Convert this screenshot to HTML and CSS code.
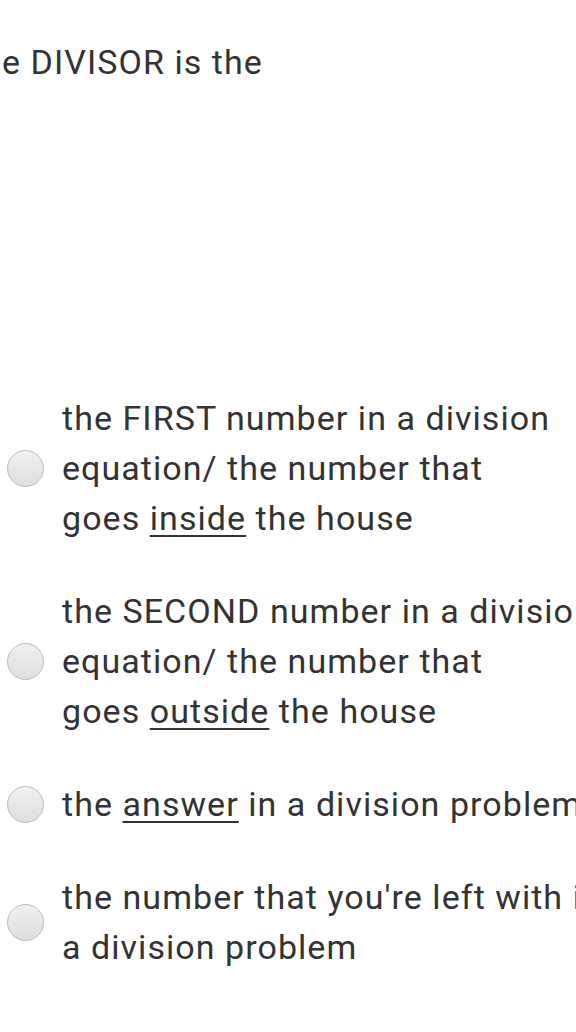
FILE: index.html
```html
<!DOCTYPE html>
<html>
<head>
<meta charset="utf-8">
<link rel="stylesheet" href="styles.css">
</head>
<body>
<div class="page">
  <div class="question">e DIVISOR is the</div>
  <div class="options">
    <div class="option">
      <span class="radio"></span>
      <div class="label">the FIRST number in a division<br>equation/ the number that<br>goes <u>inside</u> the house</div>
    </div>
    <div class="option">
      <span class="radio"></span>
      <div class="label">the SECOND number in a division<br>equation/ the number that<br>goes <u>outside</u> the house</div>
    </div>
    <div class="option">
      <span class="radio"></span>
      <div class="label">the <u>answer</u> in a division problem</div>
    </div>
    <div class="option">
      <span class="radio"></span>
      <div class="label">the number that you're left with in<br>a division problem</div>
    </div>
  </div>
</div>
</body>
</html>
```

FILE: styles.css
```css
html, body {
  margin: 0;
  padding: 0;
  background: #ffffff;
  overflow: hidden;
}

.page {
  width: 576px;
  height: 1032px;
  overflow: hidden;
  font-family: Roboto, "Noto Sans", sans-serif;
  color: #333333;
}

.question {
  padding: 37px 0 0 2px;
  font-size: 34px;
  letter-spacing: 1.05px;
  line-height: 50px;
  white-space: nowrap;
}

.options {
  margin-top: 306px;
  display: flex;
  flex-direction: column;
  gap: 43px;
}

.option {
  display: flex;
  align-items: center;
  gap: 18px;
  padding-left: 7px;
}

.radio {
  flex: none;
  width: 35px;
  height: 35px;
  border-radius: 50%;
  border: 1.5px solid #bdbdbd;
  background: linear-gradient(#f0f0f0, #dedede);
}

.label {
  font-size: 34px;
  letter-spacing: 1.05px;
  line-height: 50px;
  white-space: nowrap;
}

.label u {
  text-decoration-thickness: 2px;
  text-underline-offset: 5px;
}
```
